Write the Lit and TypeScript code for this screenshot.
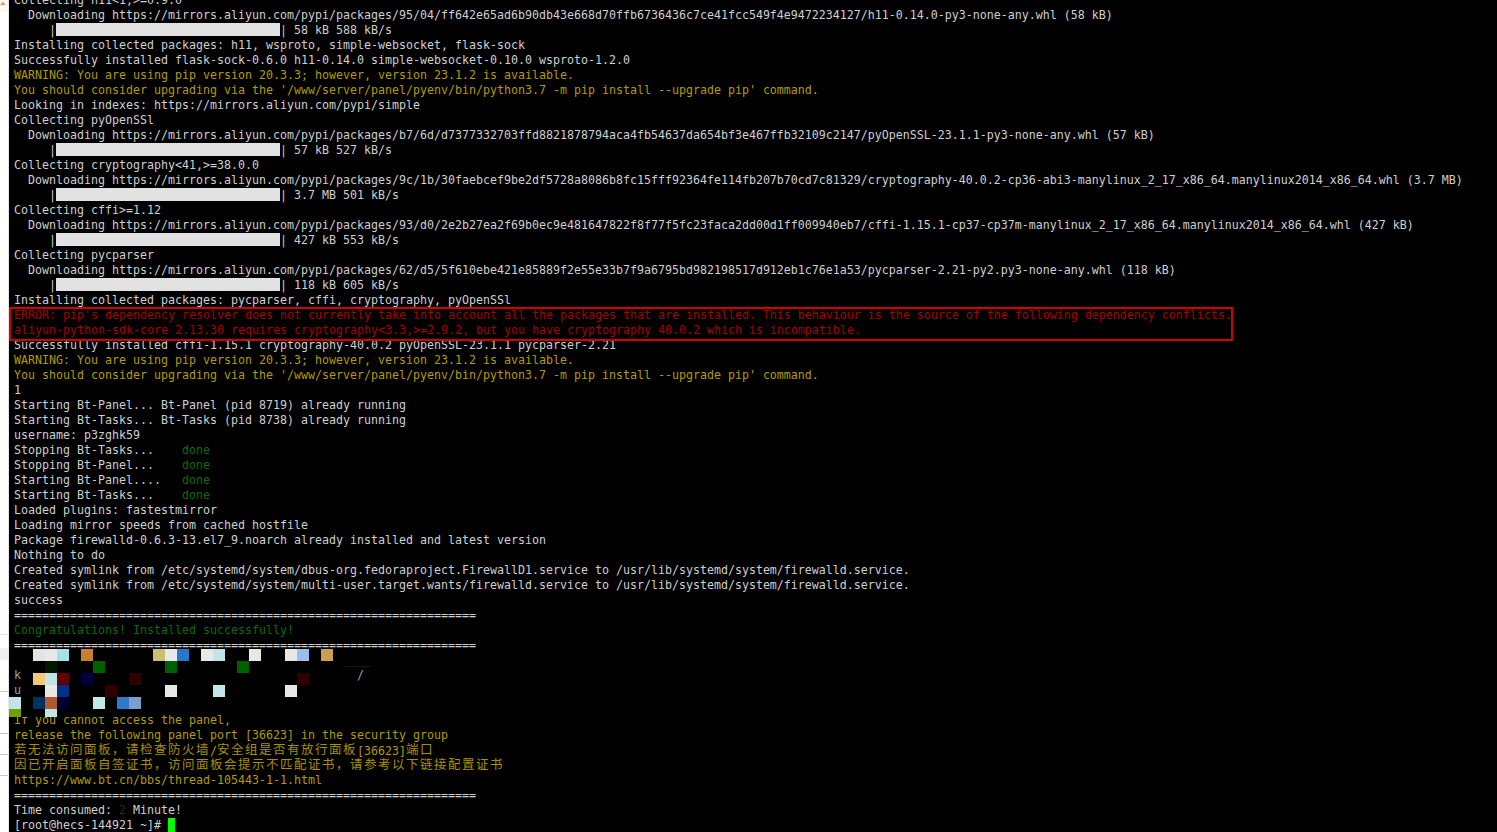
import { LitElement, html, css } from "lit";
import { customElement } from "lit/decorators.js";

type Line = { t: string; c?: string; bar?: boolean };
const P = (t: string): Line => ({ t });
const BAR = (t: string): Line => ({ t, bar: true });
const Y = (t: string): Line => ({ t, c: "y" });
const R = (t: string): Line => ({ t, c: "r" });
const G = (t: string): Line => ({ t, c: "g" });
const WARN = "WARNING: You are using pip version 20.3.3; however, version 23.1.2 is available.";
const UPG = "You should consider upgrading via the '/www/server/panel/pyenv/bin/python3.7 -m pip install --upgrade pip' command.";
const RULE = "==================================================================";
const done = (t: string) => html`${t}<span class="g">done</span>`;

const before: Line[] = [
  P("Collecting h11<1,>=0.9.0"),
  P("  Downloading https://mirrors.aliyun.com/pypi/packages/95/04/ff642e65ad6b90db43e668d70ffb6736436c7ce41fcc549f4e9472234127/h11-0.14.0-py3-none-any.whl (58 kB)"),
  BAR(" 58 kB 588 kB/s"),
  P("Installing collected packages: h11, wsproto, simple-websocket, flask-sock"),
  P("Successfully installed flask-sock-0.6.0 h11-0.14.0 simple-websocket-0.10.0 wsproto-1.2.0"),
  Y(WARN),
  Y(UPG),
  P("Looking in indexes: https://mirrors.aliyun.com/pypi/simple"),
  P("Collecting pyOpenSSl"),
  P("  Downloading https://mirrors.aliyun.com/pypi/packages/b7/6d/d7377332703ffd8821878794aca4fb54637da654bf3e467ffb32109c2147/pyOpenSSL-23.1.1-py3-none-any.whl (57 kB)"),
  BAR(" 57 kB 527 kB/s"),
  P("Collecting cryptography<41,>=38.0.0"),
  P("  Downloading https://mirrors.aliyun.com/pypi/packages/9c/1b/30faebcef9be2df5728a8086b8fc15fff92364fe114fb207b70cd7c81329/cryptography-40.0.2-cp36-abi3-manylinux_2_17_x86_64.manylinux2014_x86_64.whl (3.7 MB)"),
  BAR(" 3.7 MB 501 kB/s"),
  P("Collecting cffi>=1.12"),
  P("  Downloading https://mirrors.aliyun.com/pypi/packages/93/d0/2e2b27ea2f69b0ec9e481647822f8f77f5fc23faca2dd00d1ff009940eb7/cffi-1.15.1-cp37-cp37m-manylinux_2_17_x86_64.manylinux2014_x86_64.whl (427 kB)"),
  BAR(" 427 kB 553 kB/s"),
  P("Collecting pycparser"),
  P("  Downloading https://mirrors.aliyun.com/pypi/packages/62/d5/5f610ebe421e85889f2e55e33b7f9a6795bd982198517d912eb1c76e1a53/pycparser-2.21-py2.py3-none-any.whl (118 kB)"),
  BAR(" 118 kB 605 kB/s"),
  P("Installing collected packages: pycparser, cffi, cryptography, pyOpenSSl"),
];
const errors: Line[] = [
  R("ERROR: pip's dependency resolver does not currently take into account all the packages that are installed. This behaviour is the source of the following dependency conflicts."),
  R("aliyun-python-sdk-core 2.13.30 requires cryptography<3.3,>=2.9.2, but you have cryptography 40.0.2 which is incompatible."),
];
const middle: Line[] = [
  P("Successfully installed cffi-1.15.1 cryptography-40.0.2 pyOpenSSL-23.1.1 pycparser-2.21"),
  Y(WARN),
  Y(UPG),
  P("1"),
  P("Starting Bt-Panel... Bt-Panel (pid 8719) already running"),
  P("Starting Bt-Tasks... Bt-Tasks (pid 8738) already running"),
  P("username: p3zghk59"),
];
const after: Line[] = [
  P("Loaded plugins: fastestmirror"),
  P("Loading mirror speeds from cached hostfile"),
  P("Package firewalld-0.6.3-13.el7_9.noarch already installed and latest version"),
  P("Nothing to do"),
  P("Created symlink from /etc/systemd/system/dbus-org.fedoraproject.FirewallD1.service to /usr/lib/systemd/system/firewalld.service."),
  P("Created symlink from /etc/systemd/system/multi-user.target.wants/firewalld.service to /usr/lib/systemd/system/firewalld.service."),
  P("success"),
  P(RULE),
  G("Congratulations! Installed successfully!"),
  P(RULE),
];
const closing: Line[] = [
  Y("release the following panel port [36623] in the security group"),
  Y("若无法访问面板，请检查防火墙/安全组是否有放行面板[36623]端口"),
  Y("因已开启面板自签证书，访问面板会提示不匹配证书，请参考以下链接配置证书"),
  Y("https://www.bt.cn/bbs/thread-105443-1-1.html"),
  P(RULE),
];

/* Mosaic cells [x, y, colour, height] of the redacted block */
const cells: [number, number, string, number?][] = [
  [33, 649, "#e4e4e4"], [45, 649, "#e8e8e8"], [57, 649, "#a4e2e8"], [81, 649, "#c88030"],
  [153, 649, "#c8c070"], [165, 649, "#e8e8e8"], [177, 649, "#2878c8"], [201, 649, "#e8e8e8"],
  [213, 649, "#c0e4e8"], [249, 649, "#e8e8e8"], [285, 649, "#e8e8e8"], [297, 649, "#98c0e8"],
  [321, 649, "#c8a050"],
  [45, 661, "#001800"], [93, 661, "#006000"], [165, 661, "#006000"], [237, 661, "#006000"],
  [33, 673, "#f0c878"], [45, 673, "#c0e4e8"], [57, 673, "#600000"], [81, 673, "#000040"],
  [129, 673, "#300000"], [297, 673, "#300000"],
  [45, 685, "#e8e8e8"], [57, 685, "#003088"], [105, 685, "#300000"], [165, 685, "#e8e8e8"],
  [213, 685, "#c0e8e8"], [285, 685, "#e8e8e8"],
  [9, 697, "#c0e4e8"], [33, 697, "#003060"], [45, 697, "#b05830"], [57, 697, "#000030"],
  [93, 697, "#c0e8e8"], [117, 697, "#3078c8"], [129, 697, "#78a0c8"],
  [9, 709, "#70a000", 8], [45, 709, "#c0e8e8", 8],
];

const CJK = /([\u3000-\u9fff\uff00-\uffef]+)/;

@customElement("app-root")
export class AppRoot extends LitElement {
  static styles = css`
    :host {
      display: block;
      position: relative;
      width: 1497px;
      height: 832px;
      overflow: hidden;
      background: #000;
    }
    .page { display: flex; height: 832px; }
    .strip { flex: none; width: 9px; height: 832px; display: block; }
    .term {
      flex: 1;
      min-width: 0;
      margin-top: -7px;
      padding-left: 5px;
      font-family: "DejaVu Sans Mono", monospace;
      font-size: 11.63px;
      color: #cfcfcf;
      background: #000;
    }
    .line { height: 15px; line-height: 15px; white-space: pre; }
    .y { color: #b39b00; }
    .r { color: #a80000; }
    .g { color: #0b6b0b; }
    .dim { color: #0d3d0d; }
    .faint { color: #a0a0a0; }
    .trace { color: #2c2c2c; }
    .bar {
      display: inline-block;
      width: 224px;
      height: 13px;
      vertical-align: -2px;
      background: #e2e2e2;
    }
    .cjk {
      font-family: "Noto Sans CJK SC", sans-serif;
      font-size: 12.5px;
      letter-spacing: 1.5px;
      line-height: 1;
      vertical-align: 1px;
      color: #a89000;
    }
    .cursor {
      display: inline-block;
      width: 7px;
      height: 14px;
      vertical-align: -3px;
      background: #00ff00;
    }
    .errors { position: relative; }
    .errors::after {
      content: "";
      position: absolute;
      left: -5px;
      top: -1px;
      width: 1224px;
      height: 34px;
      box-sizing: border-box;
      border: 2px solid #d40000;
    }
    .clip {
      clip-path: polygon(0 4px, 98px 4px, 98px 0, 100% 0, 100% 100%, 0 100%);
    }
    .mosaic { position: absolute; inset: 0; pointer-events: none; }
    .cell { position: absolute; width: 12px; }
  `;

  private text(t: string) {
    return t.split(CJK).map((part, i) => (i % 2 ? html`<span class="cjk">${part}</span>` : part));
  }

  private row(l: Line) {
    if (l.bar) return html`<div class="line">     |<span class="bar"></span>|${l.t}</div>`;
    return html`<div class="line ${l.c ?? ""}">${this.text(l.t)}</div>`;
  }

  render() {
    return html`
      <div class="page">
        <svg class="strip" viewBox="0 0 9 832">
          <rect width="9" height="832" fill="#ffffff" />
          <rect y="0" width="9" height="12" fill="#fbf8f2" />
          <path d="M0 5 L3 1.5 L5.5 5 Z" fill="#d9a066" />
          <rect y="232" width="9" height="402" fill="#fefefe" />
          <rect y="634" width="9" height="1" fill="#e2e2e2" />
          <rect y="648" width="9" height="12" fill="#f1f1f1" />
          <rect y="691" width="9" height="1" fill="#c9c9c9" />
          <rect y="733" width="9" height="1" fill="#c9c9c9" />
          <rect y="754" width="9" height="1" fill="#c9c9c9" />
          <rect y="775" width="9" height="1" fill="#c9c9c9" />
          <rect x="8" width="1" height="832" fill="#e6e6e6" />
        </svg>
        <div class="term">
          ${before.map((l) => this.row(l))}
          <div class="errors">${errors.map((l) => this.row(l))}</div>
          ${middle.map((l) => this.row(l))}
          <div class="line">${done("Stopping Bt-Tasks...    ")}</div>
          <div class="line">${done("Stopping Bt-Panel...    ")}</div>
          <div class="line">${done("Starting Bt-Panel....   ")}</div>
          <div class="line">${done("Starting Bt-Tasks...    ")}</div>
          ${after.map((l) => this.row(l))}
          <div class="line trace">                                               ____</div>
          <div class="line faint">k                                                /</div>
          <div class="line faint">u</div>
          <div class="line"></div>
          <div class="line y clip">If you cannot access the panel,</div>
          ${closing.map((l) => this.row(l))}
          <div class="line">Time consumed: <span class="dim">2</span> Minute!</div>
          <div class="line">[root@hecs-144921 ~]# <span class="cursor"></span></div>
        </div>
      </div>
      <div class="mosaic">
        ${cells.map(
          ([x, y, c, h]) =>
            html`<div class="cell" style="left:${x}px;top:${y}px;height:${h ?? 12}px;background:${c}"></div>`
        )}
      </div>
    `;
  }
}
